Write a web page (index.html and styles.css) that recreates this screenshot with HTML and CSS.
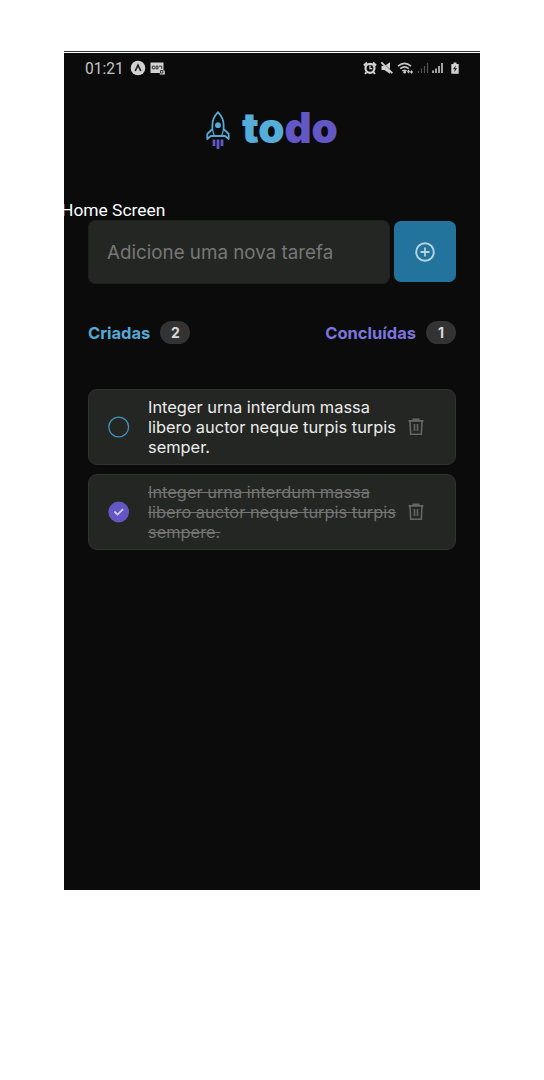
FILE: index.html
```html
<!DOCTYPE html>
<html lang="pt-BR">
<head>
<meta charset="utf-8">
<title>todo</title>
<link rel="stylesheet" href="styles.css">
</head>
<body>
<main class="frame">
  <div class="phone">
    <header class="status">
      <span class="clock">01:21</span>
      <svg class="status-left" width="36" height="16" viewBox="0 0 36 16">
        <circle cx="8" cy="8" r="7.3" fill="#d2d2d2"/>
        <path d="M5.200 11 8 5.200 10.800 11" fill="none" stroke="#222" stroke-width="1.700"/>
        <path d="M20.500 2.500h13v8h1.300v4h-5v-1.500h-9.300z" fill="#d2d2d2"/>
        <path d="M25 6.200h-2.700v2.600h2.500V7.500M26 6.200h2v2.600h-2zM29 6.200h2.700v2.600M30.500 10.500v2.500h2.300v-2.500z" fill="none" stroke="#333" stroke-width="1"/>
      </svg>
      <svg class="status-right" width="100" height="16" viewBox="0 0 100 16">
        <g fill="none" stroke="#d2d2d2" stroke-width="2.200">
          <circle cx="8" cy="8.300" r="4.500"/>
          <path d="M1.900 5.500 5 2.600M14.100 5.500 11 2.600M4.600 12l-1.500 2M11.400 12l1.500 2" stroke-width="2"/>
          <path d="M8 5.600v3h2.300" stroke-width="1.300"/>
        </g>
        <path d="M19.500 6h2.800L28 2.200v11.600L22.300 10h-2.800z" fill="#d2d2d2"/>
        <path d="M20.500 3 31 13" stroke="#0b0b0b" stroke-width="1.200"/>
        <path d="M19.300 2.400 30.300 13.200" stroke="#d2d2d2" stroke-width="1.800"/>
        <g fill="none" stroke="#c8c8c8" stroke-width="1.500">
          <path d="M36 6.100q6.500-5.500 13 0M38.200 8.700q4.300-3.600 8.600 0M40.400 11q2.100-1.600 4.200 0"/>
        </g>
        <circle cx="42.600" cy="12.300" r="1.300" fill="#d2d2d2"/>
        <path d="m45 11.500 1.500-2 1.500 2-1.500 2zM48 12l1.500-2 1.500 2-1.500 2z" fill="#c8c8c8"/>
        <path d="M56.500 11v2M59.500 8.500V13M62.500 6v7M65.500 3v10" stroke="#555" stroke-width="1.200"/>
        <path d="M71 10.500V13M74 8.500V13M77 6v7M80 3v10" stroke="#bbb" stroke-width="1.700"/>
        <path d="M91.500 2.500h3V4h2.200v9.800h-7.400V4h2.200z" fill="#d2d2d2"/>
        <path d="m93.800 5.300-2.800 4h1.800l-.5 3 2.800-4h-1.900z" fill="#222"/>
      </svg>
    </header>

    <div class="logo">
      <svg class="rocket" width="26" height="40" viewBox="0 0 26 40">
        <g fill="none" stroke="#55a9d2" stroke-width="1.800" stroke-linejoin="round">
          <path d="M13 2.200C10 5.500 7.400 10 7.400 14.500V19l-5.100 5v5l3.500-3h14.400l3.500 3v-5l-5.100-5v-4.500C18.600 10 16 5.500 13 2.200z"/>
          <path d="M7.400 18.500c.3 3 1 5 2.100 7.500M18.600 18.500c-.3 3-1 5-2.100 7.500" stroke-width="1.300"/>
        </g>
        <circle cx="13" cy="15.200" r="2.900" fill="#55a9d2"/>
        <path d="M9 29.500V36M13 29.500V39M17 29.500V36" stroke="#6257c4" stroke-width="2.800"/>
      </svg>
      <span class="word"><span class="to">to</span><span class="do">do</span></span>
    </div>

    <div class="caption">Home Screen</div>

    <form class="entry">
      <div class="field">Adicione uma nova tarefa</div>
      <div class="add">
        <svg width="22" height="22" viewBox="0 0 22 22" fill="none" stroke="#b5d3df">
          <circle cx="11" cy="11" r="8.800" stroke-width="1.900"/>
          <path d="M11 6.500v9M6.500 11h9" stroke-width="1.800"/>
        </svg>
      </div>
    </form>

    <div class="summary">
      <div class="stat created">Criadas<span class="count">2</span></div>
      <div class="stat done">Concluídas<span class="count">1</span></div>
    </div>

    <section class="tasks">
      <article class="task">
        <svg class="check" width="22" height="22" viewBox="0 0 22 22"><circle cx="10.700" cy="11" r="9.900" fill="none" stroke="#4193bf" stroke-width="1.300"/></svg>
        <p class="text">Integer urna interdum massa<br>libero auctor neque turpis turpis<br>semper.</p>
        <svg class="trash" width="16" height="18" viewBox="0 0 16 18" fill="none" stroke="#666" stroke-width="1.600">
          <path d="M.5 2.900h15M5.300 2.500V1.200h5.400v1.300M2 3.200l.7 13h10.600l.7-13"/><path d="M6.500 6v7M9.500 6v7"/>
        </svg>
      </article>
      <article class="task finished">
        <svg class="check" width="22" height="22" viewBox="0 0 22 22"><circle cx="10.700" cy="11" r="10.400" fill="#6257c4"/><path d="m6.400 10.500 3.100 3.100 5.600-5.500" fill="none" stroke="#d0cdec" stroke-width="1.800"/></svg>
        <p class="text">Integer urna interdum massa<br>libero auctor neque turpis turpis<br>sempere.</p>
        <svg class="trash" width="16" height="18" viewBox="0 0 16 18" fill="none" stroke="#666" stroke-width="1.600">
          <path d="M.5 2.900h15M5.300 2.500V1.200h5.400v1.300M2 3.200l.7 13h10.600l.7-13"/><path d="M6.500 6v7M9.500 6v7"/>
        </svg>
      </article>
    </section>
  </div>
</main>
</body>
</html>
```
FILE: styles.css
```css
* { box-sizing: border-box; }
body { margin: 0; background: #fff; font-family: Inter, sans-serif; }
.frame { width: 416px; margin: 51px auto 0; border-top: 1px solid #333; padding-top: 1px; }
.phone { height: 837px; background: #0b0b0b; overflow: hidden; }
.status { height: 30px; display: flex; align-items: center; padding: 0 18px 0 21px; }
.clock { font: 15.6px/30px Roboto, sans-serif; color: #c4c4c4; width: 45px; padding-top: 1px; }
.status-right { margin-left: auto; }
.logo { display: flex; height: 44px; margin: 26px 0 0 141px; }
.rocket { margin-top: 1px; }
.word { font-size: 42px; font-weight: 900; line-height: 38px; margin-left: 11px; letter-spacing: -0.1px; }
.to { color: #55addb; }
.do { color: #6257c4; }
.caption { height: 20px; margin: 47px 0 0 -3px; font: 17.4px/20px Roboto, sans-serif; color: #fff; }
.entry { display: flex; gap: 4px; margin: 0 24px; height: 64px; }
.field { width: 302px; height: 64px; border: 1px solid #1d1e1d; border-radius: 7px; background: #242623; color: #777; font-size: 18.8px; line-height: 63px; padding-left: 18px; white-space: nowrap; }
.add { width: 62px; height: 61px; margin-top: 1px; border-radius: 7px; background: #23749c; display: flex; align-items: center; justify-content: center; }
.summary { display: flex; justify-content: space-between; margin: 37px 24px 0; height: 23px; }
.stat { display: flex; align-items: center; font-size: 16.5px; font-weight: 700; line-height: 25px; padding-top: 1px; }
.created { color: #55a9d5; }
.done { color: #7d75df; }
.count { width: 30px; height: 23px; margin: -2px 0 0 10px; border-radius: 12px; background: #333; color: #d9d9d9; font-size: 14px; line-height: 24px; text-align: center; }
.tasks { display: flex; flex-direction: column; gap: 9px; margin: 45px 24px 0; }
.task { height: 76px; display: flex; align-items: center; border: 1px solid #313331; border-radius: 9px; background: #242623; padding: 0 31px 0 19px; }
.text { flex: 1; margin: 0 0 0 18px; font-size: 16.4px; line-height: 20px; color: #ececec; white-space: nowrap; }
.finished .text { color: #747474; text-decoration: line-through; }
```
